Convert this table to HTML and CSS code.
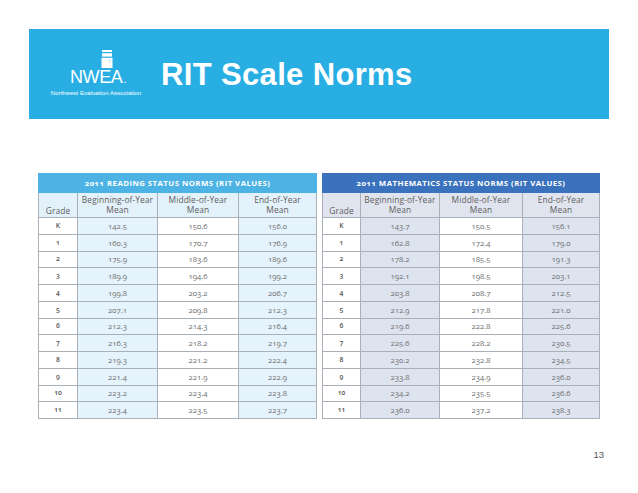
FILE: index.html
```html
<!DOCTYPE html>
<html>
<head>
<meta charset="utf-8">
<link rel="stylesheet" href="styles.css">
</head>
<body>
<header class="banner">
  <div class="logo">
    <svg class="logo-icon" width="12" height="18" viewBox="0 0 12 18">
      <rect x="1" y="0" width="10" height="2" fill="#fff"/>
      <rect x="1" y="3.2" width="10" height="3.4" fill="#fff"/>
      <rect x="0.5" y="7.8" width="11" height="10.2" fill="#fff"/>
      <rect x="8" y="9" width="1.2" height="4" fill="#bfe6f7"/>
    </svg>
    <div class="logo-word">NWEA<span class="dot">.</span></div>
    <div class="logo-sub">Northwest Evaluation Association</div>
  </div>
  <h1 class="title">RIT Scale Norms</h1>
</header>

<main class="tables">
  <table class="norms reading">
    <colgroup><col class="c-g"><col class="c-1"><col class="c-2"><col class="c-3"></colgroup>
    <thead>
      <tr class="band"><th colspan="4">2011 READING STATUS NORMS (RIT VALUES)</th></tr>
      <tr class="heads"><th class="gh">Grade</th><th>Beginning-of-Year<br>Mean</th><th>Middle-of-Year<br>Mean</th><th>End-of-Year<br>Mean</th></tr>
    </thead>
    <tbody>
      <tr><td class="g">K</td><td class="t">142.5</td><td>150.6</td><td class="t">156.0</td></tr>
      <tr><td class="g">1</td><td class="t">160.3</td><td>170.7</td><td class="t">176.9</td></tr>
      <tr><td class="g">2</td><td class="t">175.9</td><td>183.6</td><td class="t">189.6</td></tr>
      <tr><td class="g">3</td><td class="t">189.9</td><td>194.6</td><td class="t">199.2</td></tr>
      <tr><td class="g">4</td><td class="t">199.8</td><td>203.2</td><td class="t">206.7</td></tr>
      <tr><td class="g">5</td><td class="t">207.1</td><td>209.8</td><td class="t">212.3</td></tr>
      <tr><td class="g">6</td><td class="t">212.3</td><td>214.3</td><td class="t">216.4</td></tr>
      <tr><td class="g">7</td><td class="t">216.3</td><td>218.2</td><td class="t">219.7</td></tr>
      <tr><td class="g">8</td><td class="t">219.3</td><td>221.2</td><td class="t">222.4</td></tr>
      <tr><td class="g">9</td><td class="t">221.4</td><td>221.9</td><td class="t">222.9</td></tr>
      <tr><td class="g">10</td><td class="t">223.2</td><td>223.4</td><td class="t">223.8</td></tr>
      <tr><td class="g">11</td><td class="t">223.4</td><td>223.5</td><td class="t">223.7</td></tr>
    </tbody>
  </table>

  <table class="norms math">
    <colgroup><col class="c-g"><col class="c-1"><col class="c-2"><col class="c-3"></colgroup>
    <thead>
      <tr class="band"><th colspan="4">2011 MATHEMATICS STATUS NORMS (RIT VALUES)</th></tr>
      <tr class="heads"><th class="gh">Grade</th><th>Beginning-of-Year<br>Mean</th><th>Middle-of-Year<br>Mean</th><th>End-of-Year<br>Mean</th></tr>
    </thead>
    <tbody>
      <tr><td class="g">K</td><td class="t">143.7</td><td>150.5</td><td class="t">156.1</td></tr>
      <tr><td class="g">1</td><td class="t">162.8</td><td>172.4</td><td class="t">179.0</td></tr>
      <tr><td class="g">2</td><td class="t">178.2</td><td>185.5</td><td class="t">191.3</td></tr>
      <tr><td class="g">3</td><td class="t">192.1</td><td>198.5</td><td class="t">203.1</td></tr>
      <tr><td class="g">4</td><td class="t">203.8</td><td>208.7</td><td class="t">212.5</td></tr>
      <tr><td class="g">5</td><td class="t">212.9</td><td>217.8</td><td class="t">221.0</td></tr>
      <tr><td class="g">6</td><td class="t">219.6</td><td>222.8</td><td class="t">225.6</td></tr>
      <tr><td class="g">7</td><td class="t">225.6</td><td>228.2</td><td class="t">230.5</td></tr>
      <tr><td class="g">8</td><td class="t">230.2</td><td>232.8</td><td class="t">234.5</td></tr>
      <tr><td class="g">9</td><td class="t">233.8</td><td>234.9</td><td class="t">236.0</td></tr>
      <tr><td class="g">10</td><td class="t">234.2</td><td>235.5</td><td class="t">236.6</td></tr>
      <tr><td class="g">11</td><td class="t">236.0</td><td>237.2</td><td class="t">238.3</td></tr>
    </tbody>
  </table>
</main>

<footer class="pagenum">13</footer>
</body>
</html>
```

FILE: styles.css
```css
html, body {
  margin: 0;
  padding: 0;
  background: #ffffff;
}
body {
  width: 638px;
  height: 493px;
  overflow: hidden;
  font-family: "Liberation Sans", Arial, sans-serif;
}

.banner {
  margin: 29px 0 0 29px;
  width: 580px;
  height: 90px;
  background: #29aee4;
  display: flex;
  align-items: flex-start;
  box-sizing: border-box;
  padding: 21px 0 0 20px;
}

.logo {
  width: 94px;
  display: flex;
  flex-direction: column;
  align-items: center;
  color: #fff;
}
.logo-icon {
  display: block;
  margin-left: 22px;
}
.logo-word {
  font-family: "Liberation Sans", Arial, sans-serif;
  font-weight: 400;
  font-size: 18px;
  line-height: 15px;
  margin-top: 2px;
  letter-spacing: -0.4px;
  margin-left: 4px;
}
.logo-word .dot {
  font-size: 11px;
  margin-left: 1px;
}
.logo-sub {
  font-size: 6px;
  line-height: 7px;
  margin-top: 3px;
  white-space: nowrap;
  letter-spacing: 0.05px;
}

.title {
  margin: 7px 0 0 18px;
  font-size: 31px;
  font-weight: 700;
  line-height: 36px;
  color: #ffffff;
  letter-spacing: 0.35px;
}

.tables {
  display: flex;
  gap: 5px;
  margin: 54px 0 0 38px;
}

.norms {
  border-collapse: collapse;
  table-layout: fixed;
  font-family: "Open Sans", "Lato", sans-serif;
  color: #707070;
  font-variant-numeric: oldstyle-nums;
}
.reading { width: 278px; }
.math { width: 277px; }

.reading .c-g { width: 39px; }
.reading .c-1 { width: 80px; }
.reading .c-2 { width: 81px; }
.reading .c-3 { width: 78px; }
.math .c-g { width: 38px; }
.math .c-1 { width: 79px; }
.math .c-2 { width: 83px; }
.math .c-3 { width: 77px; }

.norms th, .norms td {
  padding: 0;
  text-align: center;
  border: 1px solid #a9b0b8;
}

.band th {
  height: 18px;
  color: #ffffff;
  font-size: 7.8px;
  font-weight: 700;
  letter-spacing: 0.45px;
  vertical-align: middle;
}
.reading .band th { background: #4db3e5; border-color: #4db3e5; }
.math .band th { background: #3a72bd; border-color: #3a72bd; }

.heads th {
  height: 23px;
  font-size: 8.4px;
  font-weight: 400;
  line-height: 10px;
  color: #5e5e5e;
  vertical-align: middle;
  letter-spacing: 0.1px;
}
.heads th.gh {
  vertical-align: bottom;
  padding-bottom: 1px;
}
.reading .heads th { background: #e3f1fa; }
.math .heads th { background: #e0e4ef; }

.norms td {
  height: 15.75px;
  font-size: 7.8px;
  line-height: 10px;
  background: #ffffff;
}
.norms td.g {
  font-size: 6.8px;
  font-weight: 600;
  color: #555;
}
.reading td.t { background: #e5f3fc; }
.math td.t { background: #dee3f0; }

.pagenum {
  margin: 30px 0 0 0;
  width: 604px;
  text-align: right;
  font-family: "Liberation Sans", Arial, sans-serif;
  font-size: 9.5px;
  color: #555;
}
```
